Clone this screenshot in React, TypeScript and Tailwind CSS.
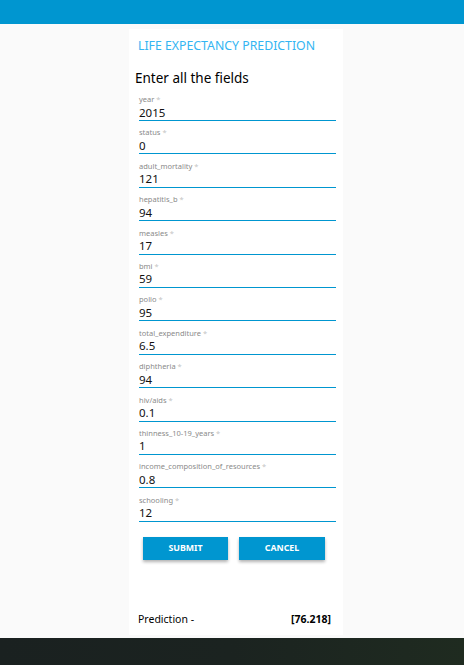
import React, { useState } from 'react';

const fields: { name: string; value: string }[] = [
  { name: 'year', value: '2015' },
  { name: 'status', value: '0' },
  { name: 'adult_mortality', value: '121' },
  { name: 'hepatitis_b', value: '94' },
  { name: 'measles', value: '17' },
  { name: 'bmi', value: '59' },
  { name: 'polio', value: '95' },
  { name: 'total_expenditure', value: '6.5' },
  { name: 'diphtheria', value: '94' },
  { name: 'hiv/aids', value: '0.1' },
  { name: 'thinness_10-19_years', value: '1' },
  { name: 'income_composition_of_resources', value: '0.8' },
  { name: 'schooling', value: '12' },
];

const App: React.FC = () => {
  const [values, setValues] = useState<string[]>(fields.map((f) => f.value));

  const handleChange = (idx: number, val: string) => {
    setValues((prev) => prev.map((v, i) => (i === idx ? val : v)));
  };

  return (
    <div className="min-h-[665px] bg-[#fafafa] flex flex-col font-['Noto_Sans','Open_Sans',sans-serif]">
      <div className="h-[24px] bg-[#0096d0]" />

      <div className="ml-[129px] mt-[5px] w-[214px] h-[606px] bg-white pt-[9px] pl-[9px] pr-[7px] flex flex-col">
        <h1 className="text-[12.3px] leading-[16px] text-[#33b5f2]">
          LIFE EXPECTANCY PREDICTION
        </h1>
        <p className="mt-[15px] -ml-[3px] text-[13.5px] leading-[18px] text-black">Enter all the fields</p>

        <div className="mt-[7px] pl-[1px]">
          {fields.map((f, idx) => (
            <div key={f.name} className="mb-[6.4px]">
              <label className="block text-[7.5px] leading-[10px] text-[#8a8a8a]">
                {f.name} <span className="text-[#c4c4c4]">*</span>
              </label>
              <input
                type="text"
                value={values[idx]}
                onChange={(e) => handleChange(idx, e.target.value)}
                className="block w-full h-[17px] text-[11.5px] leading-[16px] text-[#111] outline-none border-b border-[#0096d0] bg-transparent"
              />
            </div>
          ))}
        </div>

        <div className="mt-[9px] ml-[5px] flex gap-[11px]">
          <button className="w-[85px] h-[23px] bg-[#0096d0] text-white text-[8.8px] font-bold shadow-[0_2px_3px_rgba(0,0,0,0.3)]">
            SUBMIT
          </button>
          <button className="w-[86px] h-[23px] bg-[#0096d0] text-white text-[8.8px] font-bold shadow-[0_2px_3px_rgba(0,0,0,0.3)]">
            CANCEL
          </button>
        </div>

        <div className="mt-auto mb-[8px] flex justify-between items-center pr-[5px] text-[10.5px] leading-[16px] text-black">
          <span>Prediction -</span>
          <span className="font-bold">[76.218]</span>
        </div>
      </div>

      <div className="mt-[3px] flex-1 bg-gradient-to-r from-[#1a2120] via-[#1b2320] to-[#1f2b20]" />
    </div>
  );
};

export default App;
